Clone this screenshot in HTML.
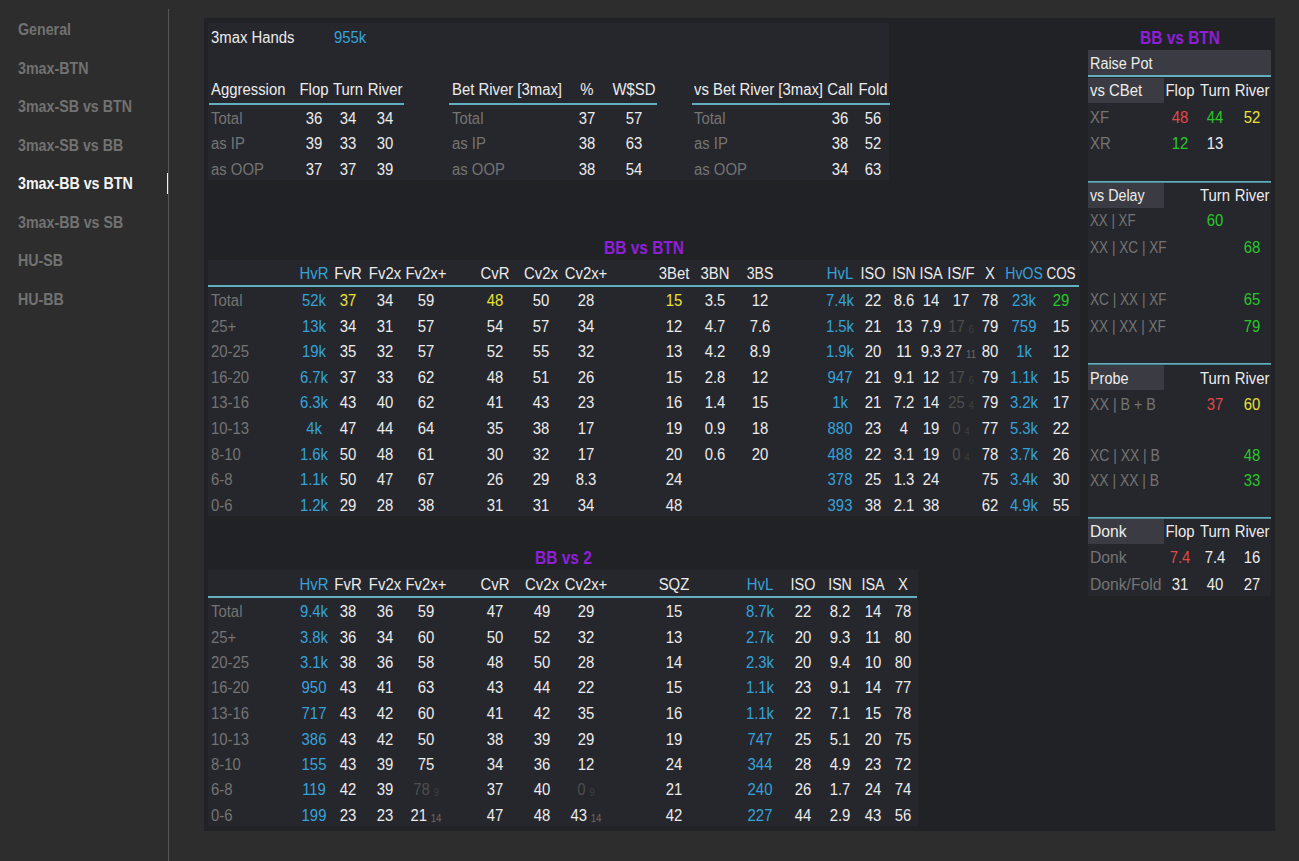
<!DOCTYPE html>
<html><head><meta charset="utf-8"><style>
html,body{margin:0;padding:0;width:1299px;height:861px;overflow:hidden;background:#2d2d2d;}
body{position:relative;font-family:"Liberation Sans",sans-serif;font-size:16px;}
.r{position:absolute;}
.t{position:absolute;line-height:20px;white-space:nowrap;transform-origin:0 0;}
.c{width:120px;text-align:center;transform-origin:60px 0 !important;}
.sub{font-size:10.5px;margin-left:4px;position:relative;top:1px;}
</style></head><body>
<div class="t" style="left:18px;top:20.00px;color:#727272;font-size:16px;font-weight:bold;transform:scaleX(0.89);">General</div>
<div class="t" style="left:18px;top:59.00px;color:#727272;font-size:16px;font-weight:bold;transform:scaleX(0.89);">3max-BTN</div>
<div class="t" style="left:18px;top:97.00px;color:#727272;font-size:16px;font-weight:bold;transform:scaleX(0.89);">3max-SB vs BTN</div>
<div class="t" style="left:18px;top:136.00px;color:#727272;font-size:16px;font-weight:bold;transform:scaleX(0.89);">3max-SB vs BB</div>
<div class="t" style="left:18px;top:174.00px;color:#f4f4f4;font-size:16px;font-weight:bold;transform:scaleX(0.89);">3max-BB vs BTN</div>
<div class="t" style="left:18px;top:213.00px;color:#727272;font-size:16px;font-weight:bold;transform:scaleX(0.89);">3max-BB vs SB</div>
<div class="t" style="left:18px;top:251.00px;color:#727272;font-size:16px;font-weight:bold;transform:scaleX(0.89);">HU-SB</div>
<div class="t" style="left:18px;top:290.00px;color:#727272;font-size:16px;font-weight:bold;transform:scaleX(0.89);">HU-BB</div>
<div class="r" style="left:168px;top:9px;width:1px;height:852px;background:#565656"></div>
<div class="r" style="left:167px;top:173px;width:1px;height:21px;background:#f0f0f0"></div>
<div class="r" style="left:204px;top:18px;width:1071px;height:813px;background:#212226"></div>
<div class="r" style="left:208px;top:23px;width:681px;height:157px;background:#26272c"></div>
<div class="t" style="left:211px;top:28.00px;color:#ececec;font-size:16px;font-weight:normal;transform:scaleX(0.93);">3max Hands</div>
<div class="t" style="left:334px;top:28.00px;color:#36a2da;font-size:16px;font-weight:normal;transform:scaleX(0.93);">955k</div>
<div class="t" style="left:211px;top:80.00px;color:#ececec;font-size:16px;font-weight:normal;transform:scaleX(0.93);">Aggression</div>
<div class="t c" style="left:253.60px;top:80.00px;color:#ececec;font-size:16px;font-weight:normal;transform:scaleX(0.93);">Flop</div>
<div class="t c" style="left:288.00px;top:80.00px;color:#ececec;font-size:16px;font-weight:normal;transform:scaleX(0.93);">Turn</div>
<div class="t c" style="left:325.00px;top:80.00px;color:#ececec;font-size:16px;font-weight:normal;transform:scaleX(0.93);">River</div>
<div class="r" style="left:209px;top:103px;width:195px;height:2px;background:#62b0bf"></div>
<div class="t" style="left:211px;top:109.00px;color:#747474;font-size:16px;font-weight:normal;transform:scaleX(0.93);">Total</div>
<div class="t c" style="left:253.60px;top:109.00px;color:#ececec;font-size:16px;font-weight:normal;transform:scaleX(0.93);">36</div>
<div class="t c" style="left:288.00px;top:109.00px;color:#ececec;font-size:16px;font-weight:normal;transform:scaleX(0.93);">34</div>
<div class="t c" style="left:325.00px;top:109.00px;color:#ececec;font-size:16px;font-weight:normal;transform:scaleX(0.93);">34</div>
<div class="t" style="left:211px;top:134.00px;color:#747474;font-size:16px;font-weight:normal;transform:scaleX(0.93);">as IP</div>
<div class="t c" style="left:253.60px;top:134.00px;color:#ececec;font-size:16px;font-weight:normal;transform:scaleX(0.93);">39</div>
<div class="t c" style="left:288.00px;top:134.00px;color:#ececec;font-size:16px;font-weight:normal;transform:scaleX(0.93);">33</div>
<div class="t c" style="left:325.00px;top:134.00px;color:#ececec;font-size:16px;font-weight:normal;transform:scaleX(0.93);">30</div>
<div class="t" style="left:211px;top:160.00px;color:#747474;font-size:16px;font-weight:normal;transform:scaleX(0.93);">as OOP</div>
<div class="t c" style="left:253.60px;top:160.00px;color:#ececec;font-size:16px;font-weight:normal;transform:scaleX(0.93);">37</div>
<div class="t c" style="left:288.00px;top:160.00px;color:#ececec;font-size:16px;font-weight:normal;transform:scaleX(0.93);">37</div>
<div class="t c" style="left:325.00px;top:160.00px;color:#ececec;font-size:16px;font-weight:normal;transform:scaleX(0.93);">39</div>
<div class="t" style="left:451.5px;top:80.00px;color:#ececec;font-size:16px;font-weight:normal;transform:scaleX(0.93);">Bet River [3max]</div>
<div class="t c" style="left:527.00px;top:80.00px;color:#ececec;font-size:16px;font-weight:normal;transform:scaleX(0.93);">%</div>
<div class="t c" style="left:574.00px;top:80.00px;color:#ececec;font-size:16px;font-weight:normal;transform:scaleX(0.93);">W$SD</div>
<div class="r" style="left:449px;top:103px;width:208px;height:2px;background:#62b0bf"></div>
<div class="t" style="left:451.5px;top:109.00px;color:#747474;font-size:16px;font-weight:normal;transform:scaleX(0.93);">Total</div>
<div class="t c" style="left:527.00px;top:109.00px;color:#ececec;font-size:16px;font-weight:normal;transform:scaleX(0.93);">37</div>
<div class="t c" style="left:574.00px;top:109.00px;color:#ececec;font-size:16px;font-weight:normal;transform:scaleX(0.93);">57</div>
<div class="t" style="left:451.5px;top:134.00px;color:#747474;font-size:16px;font-weight:normal;transform:scaleX(0.93);">as IP</div>
<div class="t c" style="left:527.00px;top:134.00px;color:#ececec;font-size:16px;font-weight:normal;transform:scaleX(0.93);">38</div>
<div class="t c" style="left:574.00px;top:134.00px;color:#ececec;font-size:16px;font-weight:normal;transform:scaleX(0.93);">63</div>
<div class="t" style="left:451.5px;top:160.00px;color:#747474;font-size:16px;font-weight:normal;transform:scaleX(0.93);">as OOP</div>
<div class="t c" style="left:527.00px;top:160.00px;color:#ececec;font-size:16px;font-weight:normal;transform:scaleX(0.93);">38</div>
<div class="t c" style="left:574.00px;top:160.00px;color:#ececec;font-size:16px;font-weight:normal;transform:scaleX(0.93);">54</div>
<div class="t" style="left:694px;top:80.00px;color:#ececec;font-size:16px;font-weight:normal;transform:scaleX(0.93);">vs Bet River [3max]</div>
<div class="t c" style="left:780.00px;top:80.00px;color:#ececec;font-size:16px;font-weight:normal;transform:scaleX(0.93);">Call</div>
<div class="t c" style="left:812.70px;top:80.00px;color:#ececec;font-size:16px;font-weight:normal;transform:scaleX(0.93);">Fold</div>
<div class="r" style="left:692px;top:103px;width:198px;height:2px;background:#62b0bf"></div>
<div class="t" style="left:694px;top:109.00px;color:#747474;font-size:16px;font-weight:normal;transform:scaleX(0.93);">Total</div>
<div class="t c" style="left:780.00px;top:109.00px;color:#ececec;font-size:16px;font-weight:normal;transform:scaleX(0.93);">36</div>
<div class="t c" style="left:812.70px;top:109.00px;color:#ececec;font-size:16px;font-weight:normal;transform:scaleX(0.93);">56</div>
<div class="t" style="left:694px;top:134.00px;color:#747474;font-size:16px;font-weight:normal;transform:scaleX(0.93);">as IP</div>
<div class="t c" style="left:780.00px;top:134.00px;color:#ececec;font-size:16px;font-weight:normal;transform:scaleX(0.93);">38</div>
<div class="t c" style="left:812.70px;top:134.00px;color:#ececec;font-size:16px;font-weight:normal;transform:scaleX(0.93);">52</div>
<div class="t" style="left:694px;top:160.00px;color:#747474;font-size:16px;font-weight:normal;transform:scaleX(0.93);">as OOP</div>
<div class="t c" style="left:780.00px;top:160.00px;color:#ececec;font-size:16px;font-weight:normal;transform:scaleX(0.93);">34</div>
<div class="t c" style="left:812.70px;top:160.00px;color:#ececec;font-size:16px;font-weight:normal;transform:scaleX(0.93);">63</div>
<div class="t" style="left:604px;top:238.00px;color:#8f1ed8;font-size:18px;font-weight:bold;transform:scaleX(0.86);">BB vs BTN</div>
<div class="r" style="left:208px;top:260px;width:872px;height:256px;background:#26272c"></div>
<div class="t c" style="left:254.00px;top:264.00px;color:#36a2da;font-size:16px;font-weight:normal;transform:scaleX(0.93);">HvR</div>
<div class="t c" style="left:288.00px;top:264.00px;color:#ececec;font-size:16px;font-weight:normal;transform:scaleX(0.93);">FvR</div>
<div class="t c" style="left:325.00px;top:264.00px;color:#ececec;font-size:16px;font-weight:normal;transform:scaleX(0.93);">Fv2x</div>
<div class="t c" style="left:366.00px;top:264.00px;color:#ececec;font-size:16px;font-weight:normal;transform:scaleX(0.93);">Fv2x+</div>
<div class="t c" style="left:434.50px;top:264.00px;color:#ececec;font-size:16px;font-weight:normal;transform:scaleX(0.93);">CvR</div>
<div class="t c" style="left:481.00px;top:264.00px;color:#ececec;font-size:16px;font-weight:normal;transform:scaleX(0.93);">Cv2x</div>
<div class="t c" style="left:526.00px;top:264.00px;color:#ececec;font-size:16px;font-weight:normal;transform:scaleX(0.93);">Cv2x+</div>
<div class="t c" style="left:614.30px;top:264.00px;color:#ececec;font-size:16px;font-weight:normal;transform:scaleX(0.93);">3Bet</div>
<div class="t c" style="left:654.60px;top:264.00px;color:#ececec;font-size:16px;font-weight:normal;transform:scaleX(0.93);">3BN</div>
<div class="t c" style="left:700.00px;top:264.00px;color:#ececec;font-size:16px;font-weight:normal;transform:scaleX(0.88);">3BS</div>
<div class="t c" style="left:779.80px;top:264.00px;color:#36a2da;font-size:16px;font-weight:normal;transform:scaleX(0.93);">HvL</div>
<div class="t c" style="left:812.50px;top:264.00px;color:#ececec;font-size:16px;font-weight:normal;transform:scaleX(0.9);">ISO</div>
<div class="t c" style="left:843.50px;top:264.00px;color:#ececec;font-size:16px;font-weight:normal;transform:scaleX(0.88);">ISN</div>
<div class="t c" style="left:871.00px;top:264.00px;color:#ececec;font-size:16px;font-weight:normal;transform:scaleX(0.9);">ISA</div>
<div class="t c" style="left:900.50px;top:264.00px;color:#ececec;font-size:16px;font-weight:normal;transform:scaleX(0.93);">IS/F</div>
<div class="t c" style="left:929.50px;top:264.00px;color:#ececec;font-size:16px;font-weight:normal;transform:scaleX(0.93);">X</div>
<div class="t c" style="left:964.00px;top:264.00px;color:#36a2da;font-size:16px;font-weight:normal;transform:scaleX(0.88);">HvOS</div>
<div class="t c" style="left:1001.00px;top:264.00px;color:#ececec;font-size:16px;font-weight:normal;transform:scaleX(0.84);">COS</div>
<div class="r" style="left:208px;top:285px;width:871px;height:2px;background:#62b0bf"></div>
<div class="t" style="left:211px;top:291.00px;color:#747474;font-size:16px;font-weight:normal;transform:scaleX(0.93);">Total</div>
<div class="t c" style="left:254.00px;top:291.00px;color:#36a2da;font-size:16px;font-weight:normal;transform:scaleX(0.93);">52k</div>
<div class="t c" style="left:288.00px;top:291.00px;color:#e8e238;font-size:16px;font-weight:normal;transform:scaleX(0.93);">37</div>
<div class="t c" style="left:325.00px;top:291.00px;color:#ececec;font-size:16px;font-weight:normal;transform:scaleX(0.93);">34</div>
<div class="t c" style="left:366.00px;top:291.00px;color:#ececec;font-size:16px;font-weight:normal;transform:scaleX(0.93);">59</div>
<div class="t c" style="left:434.50px;top:291.00px;color:#e8e238;font-size:16px;font-weight:normal;transform:scaleX(0.93);">48</div>
<div class="t c" style="left:481.00px;top:291.00px;color:#ececec;font-size:16px;font-weight:normal;transform:scaleX(0.93);">50</div>
<div class="t c" style="left:526.00px;top:291.00px;color:#ececec;font-size:16px;font-weight:normal;transform:scaleX(0.93);">28</div>
<div class="t c" style="left:614.30px;top:291.00px;color:#e8e238;font-size:16px;font-weight:normal;transform:scaleX(0.93);">15</div>
<div class="t c" style="left:654.60px;top:291.00px;color:#ececec;font-size:16px;font-weight:normal;transform:scaleX(0.93);">3.5</div>
<div class="t c" style="left:700.00px;top:291.00px;color:#ececec;font-size:16px;font-weight:normal;transform:scaleX(0.93);">12</div>
<div class="t c" style="left:779.80px;top:291.00px;color:#36a2da;font-size:16px;font-weight:normal;transform:scaleX(0.93);">7.4k</div>
<div class="t c" style="left:812.50px;top:291.00px;color:#ececec;font-size:16px;font-weight:normal;transform:scaleX(0.93);">22</div>
<div class="t c" style="left:843.50px;top:291.00px;color:#ececec;font-size:16px;font-weight:normal;transform:scaleX(0.93);">8.6</div>
<div class="t c" style="left:871.00px;top:291.00px;color:#ececec;font-size:16px;font-weight:normal;transform:scaleX(0.93);">14</div>
<div class="t c" style="left:900.50px;top:291.00px;color:#ececec;font-size:16px;font-weight:normal;transform:scaleX(0.93);">17</div>
<div class="t c" style="left:929.50px;top:291.00px;color:#ececec;font-size:16px;font-weight:normal;transform:scaleX(0.93);">78</div>
<div class="t c" style="left:964.00px;top:291.00px;color:#36a2da;font-size:16px;font-weight:normal;transform:scaleX(0.93);">23k</div>
<div class="t c" style="left:1001.00px;top:291.00px;color:#28c628;font-size:16px;font-weight:normal;transform:scaleX(0.93);">29</div>
<div class="t" style="left:211px;top:317.00px;color:#747474;font-size:16px;font-weight:normal;transform:scaleX(0.93);">25+</div>
<div class="t c" style="left:254.00px;top:317.00px;color:#36a2da;font-size:16px;font-weight:normal;transform:scaleX(0.93);">13k</div>
<div class="t c" style="left:288.00px;top:317.00px;color:#ececec;font-size:16px;font-weight:normal;transform:scaleX(0.93);">34</div>
<div class="t c" style="left:325.00px;top:317.00px;color:#ececec;font-size:16px;font-weight:normal;transform:scaleX(0.93);">31</div>
<div class="t c" style="left:366.00px;top:317.00px;color:#ececec;font-size:16px;font-weight:normal;transform:scaleX(0.93);">57</div>
<div class="t c" style="left:434.50px;top:317.00px;color:#ececec;font-size:16px;font-weight:normal;transform:scaleX(0.93);">54</div>
<div class="t c" style="left:481.00px;top:317.00px;color:#ececec;font-size:16px;font-weight:normal;transform:scaleX(0.93);">57</div>
<div class="t c" style="left:526.00px;top:317.00px;color:#ececec;font-size:16px;font-weight:normal;transform:scaleX(0.93);">34</div>
<div class="t c" style="left:614.30px;top:317.00px;color:#ececec;font-size:16px;font-weight:normal;transform:scaleX(0.93);">12</div>
<div class="t c" style="left:654.60px;top:317.00px;color:#ececec;font-size:16px;font-weight:normal;transform:scaleX(0.93);">4.7</div>
<div class="t c" style="left:700.00px;top:317.00px;color:#ececec;font-size:16px;font-weight:normal;transform:scaleX(0.93);">7.6</div>
<div class="t c" style="left:779.80px;top:317.00px;color:#36a2da;font-size:16px;font-weight:normal;transform:scaleX(0.93);">1.5k</div>
<div class="t c" style="left:812.50px;top:317.00px;color:#ececec;font-size:16px;font-weight:normal;transform:scaleX(0.93);">21</div>
<div class="t c" style="left:843.50px;top:317.00px;color:#ececec;font-size:16px;font-weight:normal;transform:scaleX(0.93);">13</div>
<div class="t c" style="left:871.00px;top:317.00px;color:#ececec;font-size:16px;font-weight:normal;transform:scaleX(0.93);">7.9</div>
<div class="t c" style="left:900.50px;top:317.00px;color:#4e4e4e;transform:scaleX(0.93)">17<span class="sub" style="color:#3e3e3e">6</span></div>
<div class="t c" style="left:929.50px;top:317.00px;color:#ececec;font-size:16px;font-weight:normal;transform:scaleX(0.93);">79</div>
<div class="t c" style="left:964.00px;top:317.00px;color:#36a2da;font-size:16px;font-weight:normal;transform:scaleX(0.93);">759</div>
<div class="t c" style="left:1001.00px;top:317.00px;color:#ececec;font-size:16px;font-weight:normal;transform:scaleX(0.93);">15</div>
<div class="t" style="left:211px;top:342.00px;color:#747474;font-size:16px;font-weight:normal;transform:scaleX(0.93);">20-25</div>
<div class="t c" style="left:254.00px;top:342.00px;color:#36a2da;font-size:16px;font-weight:normal;transform:scaleX(0.93);">19k</div>
<div class="t c" style="left:288.00px;top:342.00px;color:#ececec;font-size:16px;font-weight:normal;transform:scaleX(0.93);">35</div>
<div class="t c" style="left:325.00px;top:342.00px;color:#ececec;font-size:16px;font-weight:normal;transform:scaleX(0.93);">32</div>
<div class="t c" style="left:366.00px;top:342.00px;color:#ececec;font-size:16px;font-weight:normal;transform:scaleX(0.93);">57</div>
<div class="t c" style="left:434.50px;top:342.00px;color:#ececec;font-size:16px;font-weight:normal;transform:scaleX(0.93);">52</div>
<div class="t c" style="left:481.00px;top:342.00px;color:#ececec;font-size:16px;font-weight:normal;transform:scaleX(0.93);">55</div>
<div class="t c" style="left:526.00px;top:342.00px;color:#ececec;font-size:16px;font-weight:normal;transform:scaleX(0.93);">32</div>
<div class="t c" style="left:614.30px;top:342.00px;color:#ececec;font-size:16px;font-weight:normal;transform:scaleX(0.93);">13</div>
<div class="t c" style="left:654.60px;top:342.00px;color:#ececec;font-size:16px;font-weight:normal;transform:scaleX(0.93);">4.2</div>
<div class="t c" style="left:700.00px;top:342.00px;color:#ececec;font-size:16px;font-weight:normal;transform:scaleX(0.93);">8.9</div>
<div class="t c" style="left:779.80px;top:342.00px;color:#36a2da;font-size:16px;font-weight:normal;transform:scaleX(0.93);">1.9k</div>
<div class="t c" style="left:812.50px;top:342.00px;color:#ececec;font-size:16px;font-weight:normal;transform:scaleX(0.93);">20</div>
<div class="t c" style="left:843.50px;top:342.00px;color:#ececec;font-size:16px;font-weight:normal;transform:scaleX(0.93);">11</div>
<div class="t c" style="left:871.00px;top:342.00px;color:#ececec;font-size:16px;font-weight:normal;transform:scaleX(0.93);">9.3</div>
<div class="t c" style="left:900.50px;top:342.00px;color:#ececec;transform:scaleX(0.93)">27<span class="sub" style="color:#6a6a6a">11</span></div>
<div class="t c" style="left:929.50px;top:342.00px;color:#ececec;font-size:16px;font-weight:normal;transform:scaleX(0.93);">80</div>
<div class="t c" style="left:964.00px;top:342.00px;color:#36a2da;font-size:16px;font-weight:normal;transform:scaleX(0.93);">1k</div>
<div class="t c" style="left:1001.00px;top:342.00px;color:#ececec;font-size:16px;font-weight:normal;transform:scaleX(0.93);">12</div>
<div class="t" style="left:211px;top:368.00px;color:#747474;font-size:16px;font-weight:normal;transform:scaleX(0.93);">16-20</div>
<div class="t c" style="left:254.00px;top:368.00px;color:#36a2da;font-size:16px;font-weight:normal;transform:scaleX(0.93);">6.7k</div>
<div class="t c" style="left:288.00px;top:368.00px;color:#ececec;font-size:16px;font-weight:normal;transform:scaleX(0.93);">37</div>
<div class="t c" style="left:325.00px;top:368.00px;color:#ececec;font-size:16px;font-weight:normal;transform:scaleX(0.93);">33</div>
<div class="t c" style="left:366.00px;top:368.00px;color:#ececec;font-size:16px;font-weight:normal;transform:scaleX(0.93);">62</div>
<div class="t c" style="left:434.50px;top:368.00px;color:#ececec;font-size:16px;font-weight:normal;transform:scaleX(0.93);">48</div>
<div class="t c" style="left:481.00px;top:368.00px;color:#ececec;font-size:16px;font-weight:normal;transform:scaleX(0.93);">51</div>
<div class="t c" style="left:526.00px;top:368.00px;color:#ececec;font-size:16px;font-weight:normal;transform:scaleX(0.93);">26</div>
<div class="t c" style="left:614.30px;top:368.00px;color:#ececec;font-size:16px;font-weight:normal;transform:scaleX(0.93);">15</div>
<div class="t c" style="left:654.60px;top:368.00px;color:#ececec;font-size:16px;font-weight:normal;transform:scaleX(0.93);">2.8</div>
<div class="t c" style="left:700.00px;top:368.00px;color:#ececec;font-size:16px;font-weight:normal;transform:scaleX(0.93);">12</div>
<div class="t c" style="left:779.80px;top:368.00px;color:#36a2da;font-size:16px;font-weight:normal;transform:scaleX(0.93);">947</div>
<div class="t c" style="left:812.50px;top:368.00px;color:#ececec;font-size:16px;font-weight:normal;transform:scaleX(0.93);">21</div>
<div class="t c" style="left:843.50px;top:368.00px;color:#ececec;font-size:16px;font-weight:normal;transform:scaleX(0.93);">9.1</div>
<div class="t c" style="left:871.00px;top:368.00px;color:#ececec;font-size:16px;font-weight:normal;transform:scaleX(0.93);">12</div>
<div class="t c" style="left:900.50px;top:368.00px;color:#4e4e4e;transform:scaleX(0.93)">17<span class="sub" style="color:#3e3e3e">6</span></div>
<div class="t c" style="left:929.50px;top:368.00px;color:#ececec;font-size:16px;font-weight:normal;transform:scaleX(0.93);">79</div>
<div class="t c" style="left:964.00px;top:368.00px;color:#36a2da;font-size:16px;font-weight:normal;transform:scaleX(0.93);">1.1k</div>
<div class="t c" style="left:1001.00px;top:368.00px;color:#ececec;font-size:16px;font-weight:normal;transform:scaleX(0.93);">15</div>
<div class="t" style="left:211px;top:393.00px;color:#747474;font-size:16px;font-weight:normal;transform:scaleX(0.93);">13-16</div>
<div class="t c" style="left:254.00px;top:393.00px;color:#36a2da;font-size:16px;font-weight:normal;transform:scaleX(0.93);">6.3k</div>
<div class="t c" style="left:288.00px;top:393.00px;color:#ececec;font-size:16px;font-weight:normal;transform:scaleX(0.93);">43</div>
<div class="t c" style="left:325.00px;top:393.00px;color:#ececec;font-size:16px;font-weight:normal;transform:scaleX(0.93);">40</div>
<div class="t c" style="left:366.00px;top:393.00px;color:#ececec;font-size:16px;font-weight:normal;transform:scaleX(0.93);">62</div>
<div class="t c" style="left:434.50px;top:393.00px;color:#ececec;font-size:16px;font-weight:normal;transform:scaleX(0.93);">41</div>
<div class="t c" style="left:481.00px;top:393.00px;color:#ececec;font-size:16px;font-weight:normal;transform:scaleX(0.93);">43</div>
<div class="t c" style="left:526.00px;top:393.00px;color:#ececec;font-size:16px;font-weight:normal;transform:scaleX(0.93);">23</div>
<div class="t c" style="left:614.30px;top:393.00px;color:#ececec;font-size:16px;font-weight:normal;transform:scaleX(0.93);">16</div>
<div class="t c" style="left:654.60px;top:393.00px;color:#ececec;font-size:16px;font-weight:normal;transform:scaleX(0.93);">1.4</div>
<div class="t c" style="left:700.00px;top:393.00px;color:#ececec;font-size:16px;font-weight:normal;transform:scaleX(0.93);">15</div>
<div class="t c" style="left:779.80px;top:393.00px;color:#36a2da;font-size:16px;font-weight:normal;transform:scaleX(0.93);">1k</div>
<div class="t c" style="left:812.50px;top:393.00px;color:#ececec;font-size:16px;font-weight:normal;transform:scaleX(0.93);">21</div>
<div class="t c" style="left:843.50px;top:393.00px;color:#ececec;font-size:16px;font-weight:normal;transform:scaleX(0.93);">7.2</div>
<div class="t c" style="left:871.00px;top:393.00px;color:#ececec;font-size:16px;font-weight:normal;transform:scaleX(0.93);">14</div>
<div class="t c" style="left:900.50px;top:393.00px;color:#4e4e4e;transform:scaleX(0.93)">25<span class="sub" style="color:#3e3e3e">4</span></div>
<div class="t c" style="left:929.50px;top:393.00px;color:#ececec;font-size:16px;font-weight:normal;transform:scaleX(0.93);">79</div>
<div class="t c" style="left:964.00px;top:393.00px;color:#36a2da;font-size:16px;font-weight:normal;transform:scaleX(0.93);">3.2k</div>
<div class="t c" style="left:1001.00px;top:393.00px;color:#ececec;font-size:16px;font-weight:normal;transform:scaleX(0.93);">17</div>
<div class="t" style="left:211px;top:419.00px;color:#747474;font-size:16px;font-weight:normal;transform:scaleX(0.93);">10-13</div>
<div class="t c" style="left:254.00px;top:419.00px;color:#36a2da;font-size:16px;font-weight:normal;transform:scaleX(0.93);">4k</div>
<div class="t c" style="left:288.00px;top:419.00px;color:#ececec;font-size:16px;font-weight:normal;transform:scaleX(0.93);">47</div>
<div class="t c" style="left:325.00px;top:419.00px;color:#ececec;font-size:16px;font-weight:normal;transform:scaleX(0.93);">44</div>
<div class="t c" style="left:366.00px;top:419.00px;color:#ececec;font-size:16px;font-weight:normal;transform:scaleX(0.93);">64</div>
<div class="t c" style="left:434.50px;top:419.00px;color:#ececec;font-size:16px;font-weight:normal;transform:scaleX(0.93);">35</div>
<div class="t c" style="left:481.00px;top:419.00px;color:#ececec;font-size:16px;font-weight:normal;transform:scaleX(0.93);">38</div>
<div class="t c" style="left:526.00px;top:419.00px;color:#ececec;font-size:16px;font-weight:normal;transform:scaleX(0.93);">17</div>
<div class="t c" style="left:614.30px;top:419.00px;color:#ececec;font-size:16px;font-weight:normal;transform:scaleX(0.93);">19</div>
<div class="t c" style="left:654.60px;top:419.00px;color:#ececec;font-size:16px;font-weight:normal;transform:scaleX(0.93);">0.9</div>
<div class="t c" style="left:700.00px;top:419.00px;color:#ececec;font-size:16px;font-weight:normal;transform:scaleX(0.93);">18</div>
<div class="t c" style="left:779.80px;top:419.00px;color:#36a2da;font-size:16px;font-weight:normal;transform:scaleX(0.93);">880</div>
<div class="t c" style="left:812.50px;top:419.00px;color:#ececec;font-size:16px;font-weight:normal;transform:scaleX(0.93);">23</div>
<div class="t c" style="left:843.50px;top:419.00px;color:#ececec;font-size:16px;font-weight:normal;transform:scaleX(0.93);">4</div>
<div class="t c" style="left:871.00px;top:419.00px;color:#ececec;font-size:16px;font-weight:normal;transform:scaleX(0.93);">19</div>
<div class="t c" style="left:900.50px;top:419.00px;color:#4e4e4e;transform:scaleX(0.93)">0<span class="sub" style="color:#3e3e3e">4</span></div>
<div class="t c" style="left:929.50px;top:419.00px;color:#ececec;font-size:16px;font-weight:normal;transform:scaleX(0.93);">77</div>
<div class="t c" style="left:964.00px;top:419.00px;color:#36a2da;font-size:16px;font-weight:normal;transform:scaleX(0.93);">5.3k</div>
<div class="t c" style="left:1001.00px;top:419.00px;color:#ececec;font-size:16px;font-weight:normal;transform:scaleX(0.93);">22</div>
<div class="t" style="left:211px;top:445.00px;color:#747474;font-size:16px;font-weight:normal;transform:scaleX(0.93);">8-10</div>
<div class="t c" style="left:254.00px;top:445.00px;color:#36a2da;font-size:16px;font-weight:normal;transform:scaleX(0.93);">1.6k</div>
<div class="t c" style="left:288.00px;top:445.00px;color:#ececec;font-size:16px;font-weight:normal;transform:scaleX(0.93);">50</div>
<div class="t c" style="left:325.00px;top:445.00px;color:#ececec;font-size:16px;font-weight:normal;transform:scaleX(0.93);">48</div>
<div class="t c" style="left:366.00px;top:445.00px;color:#ececec;font-size:16px;font-weight:normal;transform:scaleX(0.93);">61</div>
<div class="t c" style="left:434.50px;top:445.00px;color:#ececec;font-size:16px;font-weight:normal;transform:scaleX(0.93);">30</div>
<div class="t c" style="left:481.00px;top:445.00px;color:#ececec;font-size:16px;font-weight:normal;transform:scaleX(0.93);">32</div>
<div class="t c" style="left:526.00px;top:445.00px;color:#ececec;font-size:16px;font-weight:normal;transform:scaleX(0.93);">17</div>
<div class="t c" style="left:614.30px;top:445.00px;color:#ececec;font-size:16px;font-weight:normal;transform:scaleX(0.93);">20</div>
<div class="t c" style="left:654.60px;top:445.00px;color:#ececec;font-size:16px;font-weight:normal;transform:scaleX(0.93);">0.6</div>
<div class="t c" style="left:700.00px;top:445.00px;color:#ececec;font-size:16px;font-weight:normal;transform:scaleX(0.93);">20</div>
<div class="t c" style="left:779.80px;top:445.00px;color:#36a2da;font-size:16px;font-weight:normal;transform:scaleX(0.93);">488</div>
<div class="t c" style="left:812.50px;top:445.00px;color:#ececec;font-size:16px;font-weight:normal;transform:scaleX(0.93);">22</div>
<div class="t c" style="left:843.50px;top:445.00px;color:#ececec;font-size:16px;font-weight:normal;transform:scaleX(0.93);">3.1</div>
<div class="t c" style="left:871.00px;top:445.00px;color:#ececec;font-size:16px;font-weight:normal;transform:scaleX(0.93);">19</div>
<div class="t c" style="left:900.50px;top:445.00px;color:#4e4e4e;transform:scaleX(0.93)">0<span class="sub" style="color:#3e3e3e">4</span></div>
<div class="t c" style="left:929.50px;top:445.00px;color:#ececec;font-size:16px;font-weight:normal;transform:scaleX(0.93);">78</div>
<div class="t c" style="left:964.00px;top:445.00px;color:#36a2da;font-size:16px;font-weight:normal;transform:scaleX(0.93);">3.7k</div>
<div class="t c" style="left:1001.00px;top:445.00px;color:#ececec;font-size:16px;font-weight:normal;transform:scaleX(0.93);">26</div>
<div class="t" style="left:211px;top:470.00px;color:#747474;font-size:16px;font-weight:normal;transform:scaleX(0.93);">6-8</div>
<div class="t c" style="left:254.00px;top:470.00px;color:#36a2da;font-size:16px;font-weight:normal;transform:scaleX(0.93);">1.1k</div>
<div class="t c" style="left:288.00px;top:470.00px;color:#ececec;font-size:16px;font-weight:normal;transform:scaleX(0.93);">50</div>
<div class="t c" style="left:325.00px;top:470.00px;color:#ececec;font-size:16px;font-weight:normal;transform:scaleX(0.93);">47</div>
<div class="t c" style="left:366.00px;top:470.00px;color:#ececec;font-size:16px;font-weight:normal;transform:scaleX(0.93);">67</div>
<div class="t c" style="left:434.50px;top:470.00px;color:#ececec;font-size:16px;font-weight:normal;transform:scaleX(0.93);">26</div>
<div class="t c" style="left:481.00px;top:470.00px;color:#ececec;font-size:16px;font-weight:normal;transform:scaleX(0.93);">29</div>
<div class="t c" style="left:526.00px;top:470.00px;color:#ececec;font-size:16px;font-weight:normal;transform:scaleX(0.93);">8.3</div>
<div class="t c" style="left:614.30px;top:470.00px;color:#ececec;font-size:16px;font-weight:normal;transform:scaleX(0.93);">24</div>
<div class="t c" style="left:779.80px;top:470.00px;color:#36a2da;font-size:16px;font-weight:normal;transform:scaleX(0.93);">378</div>
<div class="t c" style="left:812.50px;top:470.00px;color:#ececec;font-size:16px;font-weight:normal;transform:scaleX(0.93);">25</div>
<div class="t c" style="left:843.50px;top:470.00px;color:#ececec;font-size:16px;font-weight:normal;transform:scaleX(0.93);">1.3</div>
<div class="t c" style="left:871.00px;top:470.00px;color:#ececec;font-size:16px;font-weight:normal;transform:scaleX(0.93);">24</div>
<div class="t c" style="left:929.50px;top:470.00px;color:#ececec;font-size:16px;font-weight:normal;transform:scaleX(0.93);">75</div>
<div class="t c" style="left:964.00px;top:470.00px;color:#36a2da;font-size:16px;font-weight:normal;transform:scaleX(0.93);">3.4k</div>
<div class="t c" style="left:1001.00px;top:470.00px;color:#ececec;font-size:16px;font-weight:normal;transform:scaleX(0.93);">30</div>
<div class="t" style="left:211px;top:496.00px;color:#747474;font-size:16px;font-weight:normal;transform:scaleX(0.93);">0-6</div>
<div class="t c" style="left:254.00px;top:496.00px;color:#36a2da;font-size:16px;font-weight:normal;transform:scaleX(0.93);">1.2k</div>
<div class="t c" style="left:288.00px;top:496.00px;color:#ececec;font-size:16px;font-weight:normal;transform:scaleX(0.93);">29</div>
<div class="t c" style="left:325.00px;top:496.00px;color:#ececec;font-size:16px;font-weight:normal;transform:scaleX(0.93);">28</div>
<div class="t c" style="left:366.00px;top:496.00px;color:#ececec;font-size:16px;font-weight:normal;transform:scaleX(0.93);">38</div>
<div class="t c" style="left:434.50px;top:496.00px;color:#ececec;font-size:16px;font-weight:normal;transform:scaleX(0.93);">31</div>
<div class="t c" style="left:481.00px;top:496.00px;color:#ececec;font-size:16px;font-weight:normal;transform:scaleX(0.93);">31</div>
<div class="t c" style="left:526.00px;top:496.00px;color:#ececec;font-size:16px;font-weight:normal;transform:scaleX(0.93);">34</div>
<div class="t c" style="left:614.30px;top:496.00px;color:#ececec;font-size:16px;font-weight:normal;transform:scaleX(0.93);">48</div>
<div class="t c" style="left:779.80px;top:496.00px;color:#36a2da;font-size:16px;font-weight:normal;transform:scaleX(0.93);">393</div>
<div class="t c" style="left:812.50px;top:496.00px;color:#ececec;font-size:16px;font-weight:normal;transform:scaleX(0.93);">38</div>
<div class="t c" style="left:843.50px;top:496.00px;color:#ececec;font-size:16px;font-weight:normal;transform:scaleX(0.93);">2.1</div>
<div class="t c" style="left:871.00px;top:496.00px;color:#ececec;font-size:16px;font-weight:normal;transform:scaleX(0.93);">38</div>
<div class="t c" style="left:929.50px;top:496.00px;color:#ececec;font-size:16px;font-weight:normal;transform:scaleX(0.93);">62</div>
<div class="t c" style="left:964.00px;top:496.00px;color:#36a2da;font-size:16px;font-weight:normal;transform:scaleX(0.93);">4.9k</div>
<div class="t c" style="left:1001.00px;top:496.00px;color:#ececec;font-size:16px;font-weight:normal;transform:scaleX(0.93);">55</div>
<div class="t" style="left:535px;top:548.00px;color:#8f1ed8;font-size:18px;font-weight:bold;transform:scaleX(0.86);">BB vs 2</div>
<div class="r" style="left:208px;top:570px;width:710px;height:256px;background:#26272c"></div>
<div class="t c" style="left:253.50px;top:575.00px;color:#36a2da;font-size:16px;font-weight:normal;transform:scaleX(0.93);">HvR</div>
<div class="t c" style="left:288.00px;top:575.00px;color:#ececec;font-size:16px;font-weight:normal;transform:scaleX(0.93);">FvR</div>
<div class="t c" style="left:325.00px;top:575.00px;color:#ececec;font-size:16px;font-weight:normal;transform:scaleX(0.93);">Fv2x</div>
<div class="t c" style="left:366.00px;top:575.00px;color:#ececec;font-size:16px;font-weight:normal;transform:scaleX(0.93);">Fv2x+</div>
<div class="t c" style="left:434.50px;top:575.00px;color:#ececec;font-size:16px;font-weight:normal;transform:scaleX(0.93);">CvR</div>
<div class="t c" style="left:481.50px;top:575.00px;color:#ececec;font-size:16px;font-weight:normal;transform:scaleX(0.93);">Cv2x</div>
<div class="t c" style="left:526.00px;top:575.00px;color:#ececec;font-size:16px;font-weight:normal;transform:scaleX(0.93);">Cv2x+</div>
<div class="t c" style="left:613.50px;top:575.00px;color:#ececec;font-size:16px;font-weight:normal;transform:scaleX(0.93);">SQZ</div>
<div class="t c" style="left:700.00px;top:575.00px;color:#36a2da;font-size:16px;font-weight:normal;transform:scaleX(0.93);">HvL</div>
<div class="t c" style="left:743.00px;top:575.00px;color:#ececec;font-size:16px;font-weight:normal;transform:scaleX(0.9);">ISO</div>
<div class="t c" style="left:779.70px;top:575.00px;color:#ececec;font-size:16px;font-weight:normal;transform:scaleX(0.88);">ISN</div>
<div class="t c" style="left:812.80px;top:575.00px;color:#ececec;font-size:16px;font-weight:normal;transform:scaleX(0.9);">ISA</div>
<div class="t c" style="left:843.40px;top:575.00px;color:#ececec;font-size:16px;font-weight:normal;transform:scaleX(0.93);">X</div>
<div class="r" style="left:208px;top:596px;width:709px;height:2px;background:#62b0bf"></div>
<div class="t" style="left:211px;top:602.00px;color:#747474;font-size:16px;font-weight:normal;transform:scaleX(0.93);">Total</div>
<div class="t c" style="left:253.50px;top:602.00px;color:#36a2da;font-size:16px;font-weight:normal;transform:scaleX(0.93);">9.4k</div>
<div class="t c" style="left:288.00px;top:602.00px;color:#ececec;font-size:16px;font-weight:normal;transform:scaleX(0.93);">38</div>
<div class="t c" style="left:325.00px;top:602.00px;color:#ececec;font-size:16px;font-weight:normal;transform:scaleX(0.93);">36</div>
<div class="t c" style="left:366.00px;top:602.00px;color:#ececec;font-size:16px;font-weight:normal;transform:scaleX(0.93);">59</div>
<div class="t c" style="left:434.50px;top:602.00px;color:#ececec;font-size:16px;font-weight:normal;transform:scaleX(0.93);">47</div>
<div class="t c" style="left:481.50px;top:602.00px;color:#ececec;font-size:16px;font-weight:normal;transform:scaleX(0.93);">49</div>
<div class="t c" style="left:526.00px;top:602.00px;color:#ececec;font-size:16px;font-weight:normal;transform:scaleX(0.93);">29</div>
<div class="t c" style="left:613.50px;top:602.00px;color:#ececec;font-size:16px;font-weight:normal;transform:scaleX(0.93);">15</div>
<div class="t c" style="left:700.00px;top:602.00px;color:#36a2da;font-size:16px;font-weight:normal;transform:scaleX(0.93);">8.7k</div>
<div class="t c" style="left:743.00px;top:602.00px;color:#ececec;font-size:16px;font-weight:normal;transform:scaleX(0.93);">22</div>
<div class="t c" style="left:779.70px;top:602.00px;color:#ececec;font-size:16px;font-weight:normal;transform:scaleX(0.93);">8.2</div>
<div class="t c" style="left:812.80px;top:602.00px;color:#ececec;font-size:16px;font-weight:normal;transform:scaleX(0.93);">14</div>
<div class="t c" style="left:843.40px;top:602.00px;color:#ececec;font-size:16px;font-weight:normal;transform:scaleX(0.93);">78</div>
<div class="t" style="left:211px;top:628.00px;color:#747474;font-size:16px;font-weight:normal;transform:scaleX(0.93);">25+</div>
<div class="t c" style="left:253.50px;top:628.00px;color:#36a2da;font-size:16px;font-weight:normal;transform:scaleX(0.93);">3.8k</div>
<div class="t c" style="left:288.00px;top:628.00px;color:#ececec;font-size:16px;font-weight:normal;transform:scaleX(0.93);">36</div>
<div class="t c" style="left:325.00px;top:628.00px;color:#ececec;font-size:16px;font-weight:normal;transform:scaleX(0.93);">34</div>
<div class="t c" style="left:366.00px;top:628.00px;color:#ececec;font-size:16px;font-weight:normal;transform:scaleX(0.93);">60</div>
<div class="t c" style="left:434.50px;top:628.00px;color:#ececec;font-size:16px;font-weight:normal;transform:scaleX(0.93);">50</div>
<div class="t c" style="left:481.50px;top:628.00px;color:#ececec;font-size:16px;font-weight:normal;transform:scaleX(0.93);">52</div>
<div class="t c" style="left:526.00px;top:628.00px;color:#ececec;font-size:16px;font-weight:normal;transform:scaleX(0.93);">32</div>
<div class="t c" style="left:613.50px;top:628.00px;color:#ececec;font-size:16px;font-weight:normal;transform:scaleX(0.93);">13</div>
<div class="t c" style="left:700.00px;top:628.00px;color:#36a2da;font-size:16px;font-weight:normal;transform:scaleX(0.93);">2.7k</div>
<div class="t c" style="left:743.00px;top:628.00px;color:#ececec;font-size:16px;font-weight:normal;transform:scaleX(0.93);">20</div>
<div class="t c" style="left:779.70px;top:628.00px;color:#ececec;font-size:16px;font-weight:normal;transform:scaleX(0.93);">9.3</div>
<div class="t c" style="left:812.80px;top:628.00px;color:#ececec;font-size:16px;font-weight:normal;transform:scaleX(0.93);">11</div>
<div class="t c" style="left:843.40px;top:628.00px;color:#ececec;font-size:16px;font-weight:normal;transform:scaleX(0.93);">80</div>
<div class="t" style="left:211px;top:653.00px;color:#747474;font-size:16px;font-weight:normal;transform:scaleX(0.93);">20-25</div>
<div class="t c" style="left:253.50px;top:653.00px;color:#36a2da;font-size:16px;font-weight:normal;transform:scaleX(0.93);">3.1k</div>
<div class="t c" style="left:288.00px;top:653.00px;color:#ececec;font-size:16px;font-weight:normal;transform:scaleX(0.93);">38</div>
<div class="t c" style="left:325.00px;top:653.00px;color:#ececec;font-size:16px;font-weight:normal;transform:scaleX(0.93);">36</div>
<div class="t c" style="left:366.00px;top:653.00px;color:#ececec;font-size:16px;font-weight:normal;transform:scaleX(0.93);">58</div>
<div class="t c" style="left:434.50px;top:653.00px;color:#ececec;font-size:16px;font-weight:normal;transform:scaleX(0.93);">48</div>
<div class="t c" style="left:481.50px;top:653.00px;color:#ececec;font-size:16px;font-weight:normal;transform:scaleX(0.93);">50</div>
<div class="t c" style="left:526.00px;top:653.00px;color:#ececec;font-size:16px;font-weight:normal;transform:scaleX(0.93);">28</div>
<div class="t c" style="left:613.50px;top:653.00px;color:#ececec;font-size:16px;font-weight:normal;transform:scaleX(0.93);">14</div>
<div class="t c" style="left:700.00px;top:653.00px;color:#36a2da;font-size:16px;font-weight:normal;transform:scaleX(0.93);">2.3k</div>
<div class="t c" style="left:743.00px;top:653.00px;color:#ececec;font-size:16px;font-weight:normal;transform:scaleX(0.93);">20</div>
<div class="t c" style="left:779.70px;top:653.00px;color:#ececec;font-size:16px;font-weight:normal;transform:scaleX(0.93);">9.4</div>
<div class="t c" style="left:812.80px;top:653.00px;color:#ececec;font-size:16px;font-weight:normal;transform:scaleX(0.93);">10</div>
<div class="t c" style="left:843.40px;top:653.00px;color:#ececec;font-size:16px;font-weight:normal;transform:scaleX(0.93);">80</div>
<div class="t" style="left:211px;top:678.00px;color:#747474;font-size:16px;font-weight:normal;transform:scaleX(0.93);">16-20</div>
<div class="t c" style="left:253.50px;top:678.00px;color:#36a2da;font-size:16px;font-weight:normal;transform:scaleX(0.93);">950</div>
<div class="t c" style="left:288.00px;top:678.00px;color:#ececec;font-size:16px;font-weight:normal;transform:scaleX(0.93);">43</div>
<div class="t c" style="left:325.00px;top:678.00px;color:#ececec;font-size:16px;font-weight:normal;transform:scaleX(0.93);">41</div>
<div class="t c" style="left:366.00px;top:678.00px;color:#ececec;font-size:16px;font-weight:normal;transform:scaleX(0.93);">63</div>
<div class="t c" style="left:434.50px;top:678.00px;color:#ececec;font-size:16px;font-weight:normal;transform:scaleX(0.93);">43</div>
<div class="t c" style="left:481.50px;top:678.00px;color:#ececec;font-size:16px;font-weight:normal;transform:scaleX(0.93);">44</div>
<div class="t c" style="left:526.00px;top:678.00px;color:#ececec;font-size:16px;font-weight:normal;transform:scaleX(0.93);">22</div>
<div class="t c" style="left:613.50px;top:678.00px;color:#ececec;font-size:16px;font-weight:normal;transform:scaleX(0.93);">15</div>
<div class="t c" style="left:700.00px;top:678.00px;color:#36a2da;font-size:16px;font-weight:normal;transform:scaleX(0.93);">1.1k</div>
<div class="t c" style="left:743.00px;top:678.00px;color:#ececec;font-size:16px;font-weight:normal;transform:scaleX(0.93);">23</div>
<div class="t c" style="left:779.70px;top:678.00px;color:#ececec;font-size:16px;font-weight:normal;transform:scaleX(0.93);">9.1</div>
<div class="t c" style="left:812.80px;top:678.00px;color:#ececec;font-size:16px;font-weight:normal;transform:scaleX(0.93);">14</div>
<div class="t c" style="left:843.40px;top:678.00px;color:#ececec;font-size:16px;font-weight:normal;transform:scaleX(0.93);">77</div>
<div class="t" style="left:211px;top:704.00px;color:#747474;font-size:16px;font-weight:normal;transform:scaleX(0.93);">13-16</div>
<div class="t c" style="left:253.50px;top:704.00px;color:#36a2da;font-size:16px;font-weight:normal;transform:scaleX(0.93);">717</div>
<div class="t c" style="left:288.00px;top:704.00px;color:#ececec;font-size:16px;font-weight:normal;transform:scaleX(0.93);">43</div>
<div class="t c" style="left:325.00px;top:704.00px;color:#ececec;font-size:16px;font-weight:normal;transform:scaleX(0.93);">42</div>
<div class="t c" style="left:366.00px;top:704.00px;color:#ececec;font-size:16px;font-weight:normal;transform:scaleX(0.93);">60</div>
<div class="t c" style="left:434.50px;top:704.00px;color:#ececec;font-size:16px;font-weight:normal;transform:scaleX(0.93);">41</div>
<div class="t c" style="left:481.50px;top:704.00px;color:#ececec;font-size:16px;font-weight:normal;transform:scaleX(0.93);">42</div>
<div class="t c" style="left:526.00px;top:704.00px;color:#ececec;font-size:16px;font-weight:normal;transform:scaleX(0.93);">35</div>
<div class="t c" style="left:613.50px;top:704.00px;color:#ececec;font-size:16px;font-weight:normal;transform:scaleX(0.93);">16</div>
<div class="t c" style="left:700.00px;top:704.00px;color:#36a2da;font-size:16px;font-weight:normal;transform:scaleX(0.93);">1.1k</div>
<div class="t c" style="left:743.00px;top:704.00px;color:#ececec;font-size:16px;font-weight:normal;transform:scaleX(0.93);">22</div>
<div class="t c" style="left:779.70px;top:704.00px;color:#ececec;font-size:16px;font-weight:normal;transform:scaleX(0.93);">7.1</div>
<div class="t c" style="left:812.80px;top:704.00px;color:#ececec;font-size:16px;font-weight:normal;transform:scaleX(0.93);">15</div>
<div class="t c" style="left:843.40px;top:704.00px;color:#ececec;font-size:16px;font-weight:normal;transform:scaleX(0.93);">78</div>
<div class="t" style="left:211px;top:730.00px;color:#747474;font-size:16px;font-weight:normal;transform:scaleX(0.93);">10-13</div>
<div class="t c" style="left:253.50px;top:730.00px;color:#36a2da;font-size:16px;font-weight:normal;transform:scaleX(0.93);">386</div>
<div class="t c" style="left:288.00px;top:730.00px;color:#ececec;font-size:16px;font-weight:normal;transform:scaleX(0.93);">43</div>
<div class="t c" style="left:325.00px;top:730.00px;color:#ececec;font-size:16px;font-weight:normal;transform:scaleX(0.93);">42</div>
<div class="t c" style="left:366.00px;top:730.00px;color:#ececec;font-size:16px;font-weight:normal;transform:scaleX(0.93);">50</div>
<div class="t c" style="left:434.50px;top:730.00px;color:#ececec;font-size:16px;font-weight:normal;transform:scaleX(0.93);">38</div>
<div class="t c" style="left:481.50px;top:730.00px;color:#ececec;font-size:16px;font-weight:normal;transform:scaleX(0.93);">39</div>
<div class="t c" style="left:526.00px;top:730.00px;color:#ececec;font-size:16px;font-weight:normal;transform:scaleX(0.93);">29</div>
<div class="t c" style="left:613.50px;top:730.00px;color:#ececec;font-size:16px;font-weight:normal;transform:scaleX(0.93);">19</div>
<div class="t c" style="left:700.00px;top:730.00px;color:#36a2da;font-size:16px;font-weight:normal;transform:scaleX(0.93);">747</div>
<div class="t c" style="left:743.00px;top:730.00px;color:#ececec;font-size:16px;font-weight:normal;transform:scaleX(0.93);">25</div>
<div class="t c" style="left:779.70px;top:730.00px;color:#ececec;font-size:16px;font-weight:normal;transform:scaleX(0.93);">5.1</div>
<div class="t c" style="left:812.80px;top:730.00px;color:#ececec;font-size:16px;font-weight:normal;transform:scaleX(0.93);">20</div>
<div class="t c" style="left:843.40px;top:730.00px;color:#ececec;font-size:16px;font-weight:normal;transform:scaleX(0.93);">75</div>
<div class="t" style="left:211px;top:755.00px;color:#747474;font-size:16px;font-weight:normal;transform:scaleX(0.93);">8-10</div>
<div class="t c" style="left:253.50px;top:755.00px;color:#36a2da;font-size:16px;font-weight:normal;transform:scaleX(0.93);">155</div>
<div class="t c" style="left:288.00px;top:755.00px;color:#ececec;font-size:16px;font-weight:normal;transform:scaleX(0.93);">43</div>
<div class="t c" style="left:325.00px;top:755.00px;color:#ececec;font-size:16px;font-weight:normal;transform:scaleX(0.93);">39</div>
<div class="t c" style="left:366.00px;top:755.00px;color:#ececec;font-size:16px;font-weight:normal;transform:scaleX(0.93);">75</div>
<div class="t c" style="left:434.50px;top:755.00px;color:#ececec;font-size:16px;font-weight:normal;transform:scaleX(0.93);">34</div>
<div class="t c" style="left:481.50px;top:755.00px;color:#ececec;font-size:16px;font-weight:normal;transform:scaleX(0.93);">36</div>
<div class="t c" style="left:526.00px;top:755.00px;color:#ececec;font-size:16px;font-weight:normal;transform:scaleX(0.93);">12</div>
<div class="t c" style="left:613.50px;top:755.00px;color:#ececec;font-size:16px;font-weight:normal;transform:scaleX(0.93);">24</div>
<div class="t c" style="left:700.00px;top:755.00px;color:#36a2da;font-size:16px;font-weight:normal;transform:scaleX(0.93);">344</div>
<div class="t c" style="left:743.00px;top:755.00px;color:#ececec;font-size:16px;font-weight:normal;transform:scaleX(0.93);">28</div>
<div class="t c" style="left:779.70px;top:755.00px;color:#ececec;font-size:16px;font-weight:normal;transform:scaleX(0.93);">4.9</div>
<div class="t c" style="left:812.80px;top:755.00px;color:#ececec;font-size:16px;font-weight:normal;transform:scaleX(0.93);">23</div>
<div class="t c" style="left:843.40px;top:755.00px;color:#ececec;font-size:16px;font-weight:normal;transform:scaleX(0.93);">72</div>
<div class="t" style="left:211px;top:780.00px;color:#747474;font-size:16px;font-weight:normal;transform:scaleX(0.93);">6-8</div>
<div class="t c" style="left:253.50px;top:780.00px;color:#36a2da;font-size:16px;font-weight:normal;transform:scaleX(0.93);">119</div>
<div class="t c" style="left:288.00px;top:780.00px;color:#ececec;font-size:16px;font-weight:normal;transform:scaleX(0.93);">42</div>
<div class="t c" style="left:325.00px;top:780.00px;color:#ececec;font-size:16px;font-weight:normal;transform:scaleX(0.93);">39</div>
<div class="t c" style="left:366.00px;top:780.00px;color:#4e4e4e;transform:scaleX(0.93)">78<span class="sub" style="color:#3e3e3e">9</span></div>
<div class="t c" style="left:434.50px;top:780.00px;color:#ececec;font-size:16px;font-weight:normal;transform:scaleX(0.93);">37</div>
<div class="t c" style="left:481.50px;top:780.00px;color:#ececec;font-size:16px;font-weight:normal;transform:scaleX(0.93);">40</div>
<div class="t c" style="left:526.00px;top:780.00px;color:#4e4e4e;transform:scaleX(0.93)">0<span class="sub" style="color:#3e3e3e">9</span></div>
<div class="t c" style="left:613.50px;top:780.00px;color:#ececec;font-size:16px;font-weight:normal;transform:scaleX(0.93);">21</div>
<div class="t c" style="left:700.00px;top:780.00px;color:#36a2da;font-size:16px;font-weight:normal;transform:scaleX(0.93);">240</div>
<div class="t c" style="left:743.00px;top:780.00px;color:#ececec;font-size:16px;font-weight:normal;transform:scaleX(0.93);">26</div>
<div class="t c" style="left:779.70px;top:780.00px;color:#ececec;font-size:16px;font-weight:normal;transform:scaleX(0.93);">1.7</div>
<div class="t c" style="left:812.80px;top:780.00px;color:#ececec;font-size:16px;font-weight:normal;transform:scaleX(0.93);">24</div>
<div class="t c" style="left:843.40px;top:780.00px;color:#ececec;font-size:16px;font-weight:normal;transform:scaleX(0.93);">74</div>
<div class="t" style="left:211px;top:806.00px;color:#747474;font-size:16px;font-weight:normal;transform:scaleX(0.93);">0-6</div>
<div class="t c" style="left:253.50px;top:806.00px;color:#36a2da;font-size:16px;font-weight:normal;transform:scaleX(0.93);">199</div>
<div class="t c" style="left:288.00px;top:806.00px;color:#ececec;font-size:16px;font-weight:normal;transform:scaleX(0.93);">23</div>
<div class="t c" style="left:325.00px;top:806.00px;color:#ececec;font-size:16px;font-weight:normal;transform:scaleX(0.93);">23</div>
<div class="t c" style="left:366.00px;top:806.00px;color:#ececec;transform:scaleX(0.93)">21<span class="sub" style="color:#6a6a6a">14</span></div>
<div class="t c" style="left:434.50px;top:806.00px;color:#ececec;font-size:16px;font-weight:normal;transform:scaleX(0.93);">47</div>
<div class="t c" style="left:481.50px;top:806.00px;color:#ececec;font-size:16px;font-weight:normal;transform:scaleX(0.93);">48</div>
<div class="t c" style="left:526.00px;top:806.00px;color:#ececec;transform:scaleX(0.93)">43<span class="sub" style="color:#6a6a6a">14</span></div>
<div class="t c" style="left:613.50px;top:806.00px;color:#ececec;font-size:16px;font-weight:normal;transform:scaleX(0.93);">42</div>
<div class="t c" style="left:700.00px;top:806.00px;color:#36a2da;font-size:16px;font-weight:normal;transform:scaleX(0.93);">227</div>
<div class="t c" style="left:743.00px;top:806.00px;color:#ececec;font-size:16px;font-weight:normal;transform:scaleX(0.93);">44</div>
<div class="t c" style="left:779.70px;top:806.00px;color:#ececec;font-size:16px;font-weight:normal;transform:scaleX(0.93);">2.9</div>
<div class="t c" style="left:812.80px;top:806.00px;color:#ececec;font-size:16px;font-weight:normal;transform:scaleX(0.93);">43</div>
<div class="t c" style="left:843.40px;top:806.00px;color:#ececec;font-size:16px;font-weight:normal;transform:scaleX(0.93);">56</div>
<div class="t" style="left:1139.5px;top:28.00px;color:#8f1ed8;font-size:18px;font-weight:bold;transform:scaleX(0.86);">BB vs BTN</div>
<div class="r" style="left:1088px;top:50px;width:183px;height:546px;background:#26272c"></div>
<div class="r" style="left:1088px;top:50px;width:183px;height:25px;background:#3b3c43"></div>
<div class="t" style="left:1090px;top:54.00px;color:#ececec;font-size:16px;font-weight:normal;transform:scaleX(0.9);">Raise Pot</div>
<div class="r" style="left:1088px;top:75px;width:183px;height:2px;background:#62b0bf"></div>
<div class="r" style="left:1088px;top:78px;width:76px;height:25px;background:#3b3c43"></div>
<div class="t" style="left:1090px;top:81.00px;color:#ececec;font-size:16px;font-weight:normal;transform:scaleX(0.93);">vs CBet</div>
<div class="t c" style="left:1120.00px;top:81.00px;color:#ececec;font-size:16px;font-weight:normal;transform:scaleX(0.93);">Flop</div>
<div class="t c" style="left:1155.00px;top:81.00px;color:#ececec;font-size:16px;font-weight:normal;transform:scaleX(0.93);">Turn</div>
<div class="t c" style="left:1191.50px;top:81.00px;color:#ececec;font-size:16px;font-weight:normal;transform:scaleX(0.93);">River</div>
<div class="t" style="left:1090px;top:108.00px;color:#747474;font-size:16px;font-weight:normal;transform:scaleX(0.93);">XF</div>
<div class="t c" style="left:1120.00px;top:108.00px;color:#e04848;font-size:16px;font-weight:normal;transform:scaleX(0.93);">48</div>
<div class="t c" style="left:1155.00px;top:108.00px;color:#28c628;font-size:16px;font-weight:normal;transform:scaleX(0.93);">44</div>
<div class="t c" style="left:1191.50px;top:108.00px;color:#e8e238;font-size:16px;font-weight:normal;transform:scaleX(0.93);">52</div>
<div class="t" style="left:1090px;top:134.00px;color:#747474;font-size:16px;font-weight:normal;transform:scaleX(0.93);">XR</div>
<div class="t c" style="left:1120.00px;top:134.00px;color:#28c628;font-size:16px;font-weight:normal;transform:scaleX(0.93);">12</div>
<div class="t c" style="left:1155.00px;top:134.00px;color:#ececec;font-size:16px;font-weight:normal;transform:scaleX(0.93);">13</div>
<div class="r" style="left:1088px;top:181px;width:183px;height:1px;background:#62b0bf"></div>
<div class="r" style="left:1088px;top:182px;width:183px;height:1px;background:#4a8794"></div>
<div class="r" style="left:1088px;top:183px;width:76px;height:25px;background:#3b3c43"></div>
<div class="t" style="left:1090px;top:186.00px;color:#ececec;font-size:16px;font-weight:normal;transform:scaleX(0.89);">vs Delay</div>
<div class="t c" style="left:1155.00px;top:186.00px;color:#ececec;font-size:16px;font-weight:normal;transform:scaleX(0.93);">Turn</div>
<div class="t c" style="left:1191.50px;top:186.00px;color:#ececec;font-size:16px;font-weight:normal;transform:scaleX(0.93);">River</div>
<div class="t" style="left:1090px;top:211.00px;color:#747474;font-size:16px;font-weight:normal;transform:scaleX(0.83);">XX | XF</div>
<div class="t c" style="left:1155.00px;top:211.00px;color:#28c628;font-size:16px;font-weight:normal;transform:scaleX(0.93);">60</div>
<div class="t" style="left:1090px;top:238.00px;color:#747474;font-size:16px;font-weight:normal;transform:scaleX(0.85);">XX | XC | XF</div>
<div class="t c" style="left:1191.50px;top:238.00px;color:#28c628;font-size:16px;font-weight:normal;transform:scaleX(0.93);">68</div>
<div class="t" style="left:1090px;top:290.00px;color:#747474;font-size:16px;font-weight:normal;transform:scaleX(0.85);">XC | XX | XF</div>
<div class="t c" style="left:1191.50px;top:290.00px;color:#28c628;font-size:16px;font-weight:normal;transform:scaleX(0.93);">65</div>
<div class="t" style="left:1090px;top:317.00px;color:#747474;font-size:16px;font-weight:normal;transform:scaleX(0.85);">XX | XX | XF</div>
<div class="t c" style="left:1191.50px;top:317.00px;color:#28c628;font-size:16px;font-weight:normal;transform:scaleX(0.93);">79</div>
<div class="r" style="left:1088px;top:363px;width:183px;height:1px;background:#62b0bf"></div>
<div class="r" style="left:1088px;top:364px;width:183px;height:1px;background:#4a8794"></div>
<div class="r" style="left:1088px;top:365px;width:76px;height:25px;background:#3b3c43"></div>
<div class="t" style="left:1090px;top:369.00px;color:#ececec;font-size:16px;font-weight:normal;transform:scaleX(0.9);">Probe</div>
<div class="t c" style="left:1155.00px;top:369.00px;color:#ececec;font-size:16px;font-weight:normal;transform:scaleX(0.93);">Turn</div>
<div class="t c" style="left:1191.50px;top:369.00px;color:#ececec;font-size:16px;font-weight:normal;transform:scaleX(0.93);">River</div>
<div class="t" style="left:1090px;top:395.00px;color:#747474;font-size:16px;font-weight:normal;transform:scaleX(0.89);">XX | B + B</div>
<div class="t c" style="left:1155.00px;top:395.00px;color:#e04848;font-size:16px;font-weight:normal;transform:scaleX(0.93);">37</div>
<div class="t c" style="left:1191.50px;top:395.00px;color:#e8e238;font-size:16px;font-weight:normal;transform:scaleX(0.93);">60</div>
<div class="t" style="left:1090px;top:446.00px;color:#747474;font-size:16px;font-weight:normal;transform:scaleX(0.87);">XC | XX | B</div>
<div class="t c" style="left:1191.50px;top:446.00px;color:#28c628;font-size:16px;font-weight:normal;transform:scaleX(0.93);">48</div>
<div class="t" style="left:1090px;top:471.00px;color:#747474;font-size:16px;font-weight:normal;transform:scaleX(0.87);">XX | XX | B</div>
<div class="t c" style="left:1191.50px;top:471.00px;color:#28c628;font-size:16px;font-weight:normal;transform:scaleX(0.93);">33</div>
<div class="r" style="left:1088px;top:517px;width:183px;height:1px;background:#62b0bf"></div>
<div class="r" style="left:1088px;top:518px;width:183px;height:1px;background:#4a8794"></div>
<div class="r" style="left:1088px;top:519px;width:76px;height:25px;background:#3b3c43"></div>
<div class="t" style="left:1090px;top:522.00px;color:#ececec;font-size:16px;font-weight:normal;transform:scaleX(0.98);">Donk</div>
<div class="t c" style="left:1120.00px;top:522.00px;color:#ececec;font-size:16px;font-weight:normal;transform:scaleX(0.93);">Flop</div>
<div class="t c" style="left:1155.00px;top:522.00px;color:#ececec;font-size:16px;font-weight:normal;transform:scaleX(0.93);">Turn</div>
<div class="t c" style="left:1191.50px;top:522.00px;color:#ececec;font-size:16px;font-weight:normal;transform:scaleX(0.93);">River</div>
<div class="t" style="left:1090px;top:548.00px;color:#747474;font-size:16px;font-weight:normal;transform:scaleX(0.98);">Donk</div>
<div class="t c" style="left:1120.00px;top:548.00px;color:#e04848;font-size:16px;font-weight:normal;transform:scaleX(0.93);">7.4</div>
<div class="t c" style="left:1155.00px;top:548.00px;color:#ececec;font-size:16px;font-weight:normal;transform:scaleX(0.93);">7.4</div>
<div class="t c" style="left:1191.50px;top:548.00px;color:#ececec;font-size:16px;font-weight:normal;transform:scaleX(0.93);">16</div>
<div class="t" style="left:1090px;top:575.00px;color:#747474;font-size:16px;font-weight:normal;transform:scaleX(0.98);">Donk/Fold</div>
<div class="t c" style="left:1120.00px;top:575.00px;color:#ececec;font-size:16px;font-weight:normal;transform:scaleX(0.93);">31</div>
<div class="t c" style="left:1155.00px;top:575.00px;color:#ececec;font-size:16px;font-weight:normal;transform:scaleX(0.93);">40</div>
<div class="t c" style="left:1191.50px;top:575.00px;color:#ececec;font-size:16px;font-weight:normal;transform:scaleX(0.93);">27</div>
</body></html>
